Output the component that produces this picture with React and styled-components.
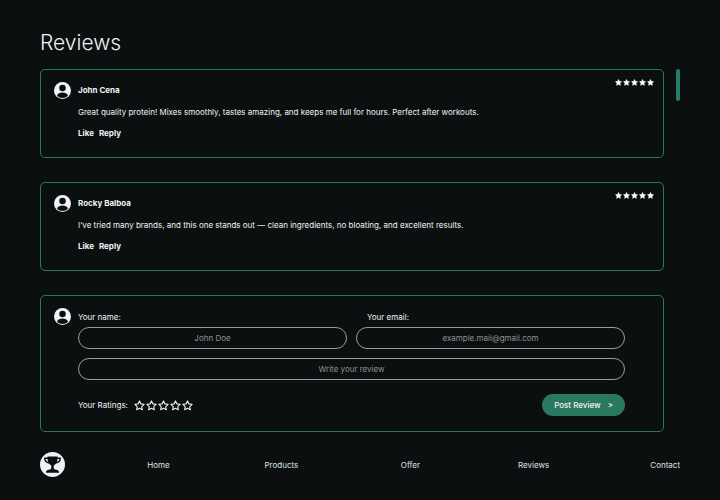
import React, { useState } from "react";
import styled, { createGlobalStyle } from "styled-components";

const reviews = [
  {
    id: 1,
    name: "John Cena",
    text: "Great quality protein! Mixes smoothly, tastes amazing, and keeps me full for hours. Perfect after workouts.",
    rating: 5
  },
  {
    id: 2,
    name: "Rocky Balboa",
    text: "I’ve tried many brands, and this one stands out — clean ingredients, no bloating, and excellent results.",
    rating: 5
  }
];

const links = ["Home", "Products", "Offer", "Reviews", "Contact"];

const STAR_PATH =
  "M12 2l3 6.500 7 .9-5.100 4.900 1.300 7L12 17.900l-6.200 3.400 1.300-7L2 9.400l7-.9z";

const Star = ({ filled, size }) => (
  <svg width={size} height={size} viewBox="0 0 24 24" aria-hidden="true">
    <path
      d={STAR_PATH}
      fill={filled ? "currentColor" : "none"}
      stroke="currentColor"
      strokeWidth="2.400"
      strokeLinejoin="round"
    />
  </svg>
);

const Avatar = () => (
  <AvatarIcon width="17" height="17" viewBox="0 0 34 34" aria-hidden="true">
    <circle cx="17" cy="17" r="17" fill="#f1f3f6" />
    <circle cx="17" cy="12" r="6.500" fill="#0b0f10" />
    <path
      d="M6 27c2-4.500 6-6 11-6s9 1.500 11 6c-3 3.500-7 5-11 5s-8-1.500-11-5z"
      fill="#0b0f10"
    />
  </AvatarIcon>
);

const Logo = () => (
  <svg width="25" height="25" viewBox="0 0 50 50" aria-hidden="true">
    <circle cx="25" cy="25" r="25" fill="#eff2f5" />
    <path
      d="M15 9h20v3c0 8-2.500 12-7.500 15v5c0 2 2 3 5 3.500 4 .8 5.500 2 5.500 6H12c0-4 1.500-5.200 5.500-6 3-.5 5-1.500 5-3.500v-5C17.500 24 15 20 15 12z"
      fill="#0b0f10"
    />
    <path
      d="M16 12.500H9.500c0 5 3 8.500 9.500 9.500M34 12.500h6.500c0 5-3 8.500-9.500 9.500"
      fill="none"
      stroke="#0b0f10"
      strokeWidth="3"
      strokeLinejoin="round"
    />
  </svg>
);

const Review = ({ review }) => (
  <Card as="article">
    <Avatar />
    <Body>
      <Name>{review.name}</Name>
      <Text>{review.text}</Text>
      <Actions>
        <TextButton type="button">Like</TextButton>
        <TextButton type="button">Reply</TextButton>
      </Actions>
    </Body>
    <Score role="img" aria-label={`${review.rating} out of 5`}>
      {Array.from({ length: review.rating }, (_, i) => (
        <Star key={i} size={7} filled />
      ))}
    </Score>
  </Card>
);

const ReviewForm = () => {
  const [rating, setRating] = useState(0);

  return (
    <Card as="form" onSubmit={e => e.preventDefault()}>
      <Avatar />
      <Fields>
        <Row>
          <Field>
            <Label htmlFor="name">Your name:</Label>
            <Input id="name" type="text" placeholder="John Doe" />
          </Field>
          <Field>
            <Label htmlFor="email" $indent>
              Your email:
            </Label>
            <Input
              id="email"
              type="email"
              placeholder="example.mail@gmail.com"
            />
          </Field>
        </Row>
        <Input
          type="text"
          aria-label="Your review"
          placeholder="Write your review"
        />
        <FormFooter>
          <Ratings>
            <legend>Your Ratings:</legend>
            <Stars>
              {[1, 2, 3, 4, 5].map(n => (
                <StarLabel key={n}>
                  <input
                    type="radio"
                    name="rating"
                    aria-label={`${n} stars`}
                    checked={rating === n}
                    onChange={() => setRating(n)}
                  />
                  <Star size={11} filled={n <= rating} />
                </StarLabel>
              ))}
            </Stars>
          </Ratings>
          <PostButton type="submit">
            Post Review <span>&gt;</span>
          </PostButton>
        </FormFooter>
      </Fields>
    </Card>
  );
};

export default function App() {
  return (
    <Page>
      <GlobalStyle />
      <Title>Reviews</Title>
      <Content>
        <List>
          {reviews.map(review => (
            <Review key={review.id} review={review} />
          ))}
          <ReviewForm />
        </List>
        <ScrollThumb />
      </Content>
      <Footer>
        <a href="#home" aria-label="Home page">
          <Logo />
        </a>
        {links.map(link => (
          <a key={link} href={`#${link.toLowerCase()}`}>
            {link}
          </a>
        ))}
      </Footer>
    </Page>
  );
}

const GlobalStyle = createGlobalStyle`
  * {
    box-sizing: border-box;
  }
  body {
    margin: 0;
    background: #0b0f10;
    color: #f1f3f3;
    font-family: Inter, "Liberation Sans", sans-serif;
    font-size: 8px;
    line-height: 12px;
  }
  button,
  input {
    font: inherit;
    color: inherit;
  }
  svg {
    display: block;
  }
`;

const Page = styled.main`
  padding: 28px 40px 20px;
`;

const Title = styled.h1`
  margin: 0 0 11px;
  font-size: 21px;
  line-height: 30px;
  font-weight: 300;
`;

const Content = styled.div`
  display: grid;
  grid-template-columns: 1fr 4px;
  gap: 12px;
`;

const List = styled.section`
  display: grid;
  gap: 24px;
`;

const ScrollThumb = styled.div`
  height: 32px;
  border-radius: 2px;
  background: #2a7d64;
`;

const Card = styled.div`
  display: grid;
  grid-template-columns: 17px 1fr auto;
  gap: 7px;
  align-items: start;
  padding: 9px 9px 15px 13px;
  border: 1px solid #28795f;
  border-radius: 5px;
`;

const AvatarIcon = styled.svg`
  margin-top: 3px;
`;

const Body = styled.div`
  padding: 5px 0 3px;
`;

const Name = styled.h2`
  margin: 0 0 10px;
  font-size: 8px;
  font-weight: 700;
`;

const Text = styled.p`
  margin: 0 0 9px;
`;

const Actions = styled.div`
  display: flex;
  gap: 5px;
`;

const TextButton = styled.button`
  padding: 0;
  border: 0;
  background: none;
  font-weight: 700;
  cursor: pointer;
`;

const Score = styled.div`
  display: flex;
  gap: 1px;
  color: #fff;
`;

const Fields = styled.div`
  display: grid;
  gap: 9px;
  padding: 6px 22px 0 0;
`;

const Row = styled.div`
  display: grid;
  grid-template-columns: 1fr 1fr;
  gap: 9px;
`;

const Field = styled.div`
  display: grid;
  gap: 4px;
`;

const Label = styled.label`
  padding-left: ${props => (props.$indent ? "11px" : "0")};
`;

const Input = styled.input`
  width: 100%;
  height: 22px;
  padding: 0 12px;
  border: 1px solid #9a9d9e;
  border-radius: 11px;
  background: transparent;
  text-align: center;
  &::placeholder {
    color: #8f9394;
    opacity: 1;
  }
`;

const FormFooter = styled.div`
  display: flex;
  justify-content: space-between;
  align-items: center;
  padding-top: 5px;
`;

const Ratings = styled.fieldset`
  display: flex;
  align-items: center;
  margin: 0;
  padding: 0;
  border: 0;
  legend {
    float: left;
    padding: 0;
    margin-right: 6px;
  }
`;

const Stars = styled.div`
  display: flex;
  gap: 1px;
`;

const StarLabel = styled.label`
  cursor: pointer;
  input {
    appearance: none;
    position: absolute;
    margin: 0;
  }
`;

const PostButton = styled.button`
  display: flex;
  gap: 7px;
  padding: 5px 12px;
  border: 0;
  border-radius: 11px;
  background: #2a7860;
  font-weight: 500;
  cursor: pointer;
`;

const Footer = styled.footer`
  display: grid;
  grid-template-columns: 107fr 117fr 136fr 117fr 132fr auto;
  align-items: center;
  margin-top: 20px;
  a {
    color: #dfe2e2;
    text-decoration: none;
  }
`;
